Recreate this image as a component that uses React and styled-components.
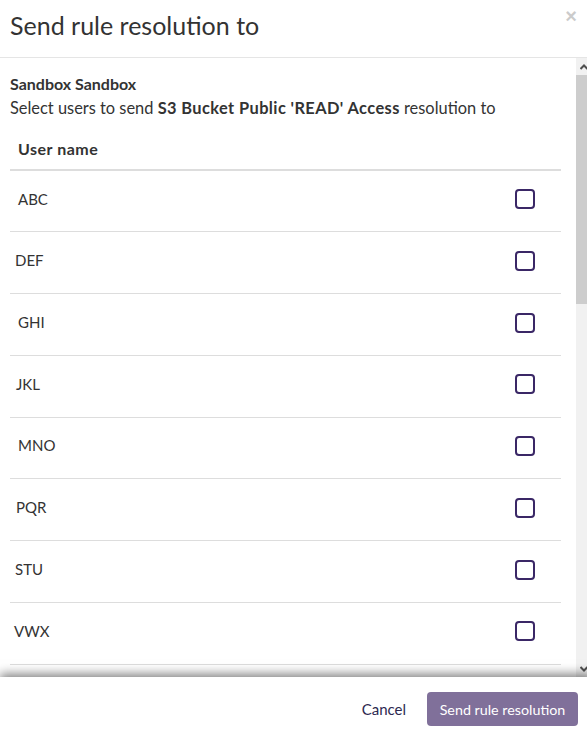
import React from 'react';
import styled, { createGlobalStyle } from 'styled-components';

const GlobalStyle = createGlobalStyle`
  html, body {
    margin: 0;
    padding: 0;
    overflow: hidden;
    background: #fff;
  }
  body {
    font-family: Lato, "Open Sans", sans-serif;
    color: #333;
  }
`;

const users = [
  { name: 'ABC', indent: 8 },
  { name: 'DEF', indent: 5 },
  { name: 'GHI', indent: 8 },
  { name: 'JKL', indent: 6 },
  { name: 'MNO', indent: 8 },
  { name: 'PQR', indent: 6 },
  { name: 'STU', indent: 5 },
  { name: 'VWX', indent: 4 },
];

const Modal = styled.div`
  width: 593px;
  height: 744px;
  display: flex;
  flex-direction: column;
  background: #fff;
`;

const Header = styled.div`
  height: 57px;
  flex: none;
  display: flex;
  align-items: center;
  justify-content: space-between;
  padding: 0 15px 0 10px;
  border-bottom: 1px solid #e5e5e5;
  box-sizing: content-box;
`;

const Title = styled.h4`
  margin: 0 0 8px;
  font-size: 25px;
  font-weight: 400;
  line-height: 26px;
  color: #333;
`;

const Close = styled.button`
  align-self: flex-start;
  margin-top: 4px;
  margin-right: 1px;
  padding: 0;
  border: 0;
  background: none;
  font-family: "Liberation Sans", sans-serif;
  font-size: 20px;
  font-weight: 700;
  line-height: 24px;
  color: #000;
  opacity: 0.2;
`;

const BodyWrap = styled.div`
  height: 619px;
  flex: none;
  display: flex;
  overflow: hidden;
`;

const Body = styled.div`
  flex: 1;
  padding: 14px 15px 0 10px;
  overflow: hidden;
`;

const Account = styled.div`
  font-weight: 700;
  font-size: 16px;
  line-height: 24px;
`;

const Intro = styled.div`
  font-size: 16.4px;
  line-height: 24px;

  b {
    letter-spacing: 0.4px;
  }
`;

const Table = styled.table`
  width: 100%;
  margin-top: 8px;
  border-collapse: collapse;
  font-size: 15px;
`;

const HeadCell = styled.th`
  text-align: left;
  font-size: 16px;
  font-weight: 700;
  letter-spacing: 0.5px;
  padding: 8px 8px 7px;
  line-height: 26px;
  border-bottom: 2px solid #ddd;
`;

const Row = styled.tr`
  height: 61.75px;
  border-bottom: 1px solid #ddd;
`;

const NameCell = styled.td`
  padding: 0 0 5px ${({ $indent }) => $indent}px;
  vertical-align: middle;
`;

const CheckCell = styled.td`
  width: 46px;
  padding-right: 26px;
  text-align: right;
  vertical-align: middle;
`;

const Check = styled.span`
  display: inline-block;
  width: 16px;
  height: 16px;
  border: 2px solid #3a2766;
  border-radius: 4px;
  vertical-align: middle;
  margin-top: -8px;
`;

const Scrollbar = styled.div`
  width: 17px;
  flex: none;
  display: flex;
  flex-direction: column;
  background: #f1f1f1;
`;

const ScrollButton = styled.div`
  height: 17px;
  flex: none;
  display: flex;
  align-items: center;
  padding-left: 4px;
`;

const Thumb = styled.div`
  height: 229px;
  background: #cdcdcd;
`;

const Spacer = styled.div`
  flex: 1;
`;

const Footer = styled.div`
  flex: none;
  position: relative;
  display: flex;
  justify-content: flex-end;
  align-items: center;
  gap: 9px;
  padding: 15px;
  background: #fff;
  box-shadow: 0 -3px 10px rgba(0, 0, 0, 0.5);
`;

const CancelButton = styled.button`
  border: 0;
  background: none;
  padding: 6px 12px;
  font-family: inherit;
  font-size: 15px;
  color: #2d2950;
`;

const PrimaryButton = styled.button`
  width: 151px;
  height: 34px;
  padding: 0;
  border: 0;
  border-radius: 4px;
  background: #80709a;
  color: #fff;
  font-family: inherit;
  font-size: 14.3px;
`;

const Chevron = ({ up }) => (
  <svg width="8" height="6" viewBox="0 0 8 6">
    <path
      d={up ? 'M0.5 5 L4 1.5 L7.5 5' : 'M0.5 1 L4 4.5 L7.5 1'}
      fill="none"
      stroke="#505050"
      strokeWidth="2"
    />
  </svg>
);

export default function App() {
  return (
    <Modal>
      <GlobalStyle />
      <Header>
        <Title>Send rule resolution to</Title>
        <Close>×</Close>
      </Header>
      <BodyWrap>
        <Body>
          <Account>Sandbox Sandbox</Account>
          <Intro>
            Select users to send <b>S3 Bucket Public 'READ' Access</b> resolution to
          </Intro>
          <Table>
            <thead>
              <tr>
                <HeadCell colSpan={2}>User name</HeadCell>
              </tr>
            </thead>
            <tbody>
              {users.map((u) => (
                <Row key={u.name}>
                  <NameCell $indent={u.indent}>{u.name}</NameCell>
                  <CheckCell>
                    <Check />
                  </CheckCell>
                </Row>
              ))}
            </tbody>
          </Table>
        </Body>
        <Scrollbar>
          <ScrollButton>
            <Chevron up />
          </ScrollButton>
          <Thumb />
          <Spacer />
          <ScrollButton>
            <Chevron />
          </ScrollButton>
        </Scrollbar>
      </BodyWrap>
      <Footer>
        <CancelButton>Cancel</CancelButton>
        <PrimaryButton>Send rule resolution</PrimaryButton>
      </Footer>
    </Modal>
  );
}
